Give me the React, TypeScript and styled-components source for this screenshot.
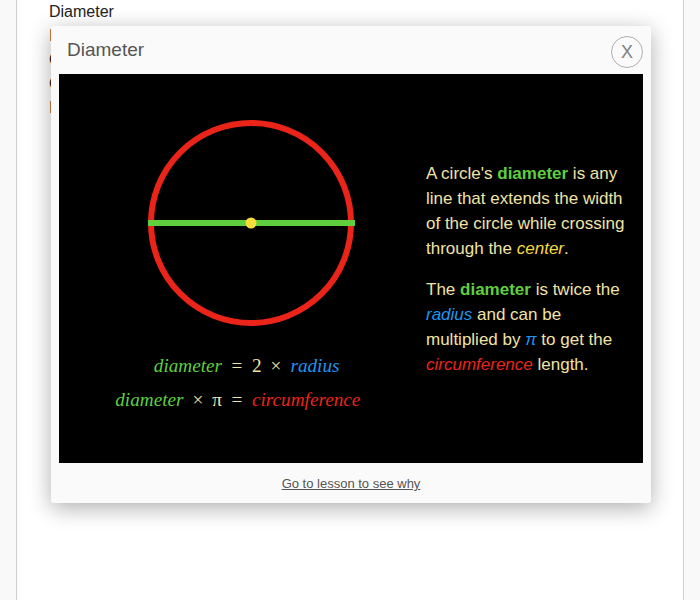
import React from "react";
import styled, { createGlobalStyle } from "styled-components";

const Global = createGlobalStyle`
  html, body { margin: 0; padding: 0; background: #f9f9f9; }
  body { font-family: "Liberation Sans", Arial, sans-serif; }
`;

const Page = styled.div`
  position: relative;
  margin: 0 16px;
  min-height: 600px;
  box-sizing: border-box;
  background: #ffffff;
  border-left: 1px solid #cfcfcf;
  border-right: 1px solid #cfcfcf;
  padding: 0 32px;
`;

const TermLine = styled.div`
  font-size: 16px;
  line-height: 24px;
  color: #222;
`;

const Modal = styled.div`
  position: absolute;
  left: 34px;
  top: 26px;
  width: 600px;
  background: #fafafa;
  border-radius: 3px;
  box-shadow: 0 5px 22px rgba(0, 0, 0, 0.32);
  display: flex;
  flex-direction: column;
`;

const Header = styled.div`
  height: 48px;
  display: flex;
  align-items: center;
  justify-content: space-between;
  padding: 0 8px 0 16px;
`;

const Title = styled.div`
  font-size: 19px;
  color: #555;
`;

const Close = styled.button`
  width: 32px;
  height: 32px;
  border-radius: 50%;
  border: 1px solid #b0b0b0;
  background: transparent;
  color: #808080;
  font-family: "Liberation Sans", Arial, sans-serif;
  font-size: 18px;
  padding: 0;
  display: flex;
  align-items: center;
  justify-content: center;
  margin-top: 4px;
`;

const Panel = styled.div`
  margin: 0 8px;
  height: 389px;
  background: #000;
  display: grid;
  grid-template-columns: 367px 1fr;
`;

const Figure = styled.div`
  padding: 41px 0 0 17px;
  display: flex;
  flex-direction: column;
  align-items: center;
`;

const Formulas = styled.div`
  margin-top: 18px;
  display: grid;
  grid-template-columns: 150px 30px 150px;
  margin-right: 28px;
  font-family: "Liberation Serif", "Times New Roman", serif;
  font-size: 19.2px;
  line-height: 34px;
  color: #efe3a8;
`;

const Cell = styled.div<{ $align: "left" | "center" | "right" }>`
  text-align: ${(p) => p.$align};
  white-space: nowrap;
`;

const Var = styled.i<{ $c: string }>`
  color: ${(p) => p.$c};
  font-style: italic;
`;

const Op = styled.span`
  margin: 0 9px;
`;

const Text = styled.div`
  align-self: center;
  width: 206px;
  font-size: 17px;
  line-height: 25px;
  color: #f0e3a6;
`;

const Para = styled.p`
  margin: 0 0 16px;
  &:last-child { margin-bottom: 0; }
`;

const Bold = styled.b`
  color: #5fcf3d;
`;

const Em = styled.i<{ $c: string }>`
  color: ${(p) => p.$c};
`;

const Footer = styled.div`
  height: 40px;
  display: flex;
  align-items: center;
  justify-content: center;
`;

const Link = styled.a`
  font-size: 13px;
  color: #555;
  text-decoration: underline;
  margin-top: 1px;
`;

const GREEN = "#5fcf3d";
const BLUE = "#1e95f0";
const RED = "#ea2419";
const YELLOW = "#f7dc3c";

export default function App() {
  return (
    <>
      <Global />
      <Page>
        <TermLine>Diameter</TermLine>
        <TermLine>Illustrating diameter</TermLine>
        <TermLine>Circle</TermLine>
        <TermLine>Circumference</TermLine>
        <TermLine>Interactive</TermLine>
        <Modal>
          <Header>
            <Title>Diameter</Title>
            <Close>X</Close>
          </Header>
          <Panel>
            <Figure>
              <svg width="216" height="216" viewBox="0 0 216 216">
                <circle cx="108" cy="108" r="100" fill="none" stroke={RED} strokeWidth="6" />
                <line x1="5" y1="108" x2="212" y2="108" stroke={GREEN} strokeWidth="6" />
                <circle cx="108" cy="108" r="5.5" fill={YELLOW} />
              </svg>
              <Formulas>
                <Cell $align="right">
                  <Var $c={GREEN}>diameter</Var>
                </Cell>
                <Cell $align="center">=</Cell>
                <Cell $align="left">
                  2<Op>×</Op>
                  <Var $c={BLUE}>radius</Var>
                </Cell>
                <Cell $align="right">
                  <Var $c={GREEN}>diameter</Var>
                  <Op>×</Op>π
                </Cell>
                <Cell $align="center">=</Cell>
                <Cell $align="left">
                  <Var $c={RED}>circumference</Var>
                </Cell>
              </Formulas>
            </Figure>
            <Text>
              <Para>
                A circle's <Bold>diameter</Bold> is any line that extends the width of the
                circle while crossing through the <Em $c={YELLOW}>center</Em>.
              </Para>
              <Para>
                The <Bold>diameter</Bold> is twice the <Em $c={BLUE}>radius</Em> and can be
                multiplied by <Em $c={BLUE}>π</Em> to get the{" "}
                <Em $c={RED}>circumference</Em> length.
              </Para>
            </Text>
          </Panel>
          <Footer>
            <Link href="#">Go to lesson to see why</Link>
          </Footer>
        </Modal>
      </Page>
    </>
  );
}
